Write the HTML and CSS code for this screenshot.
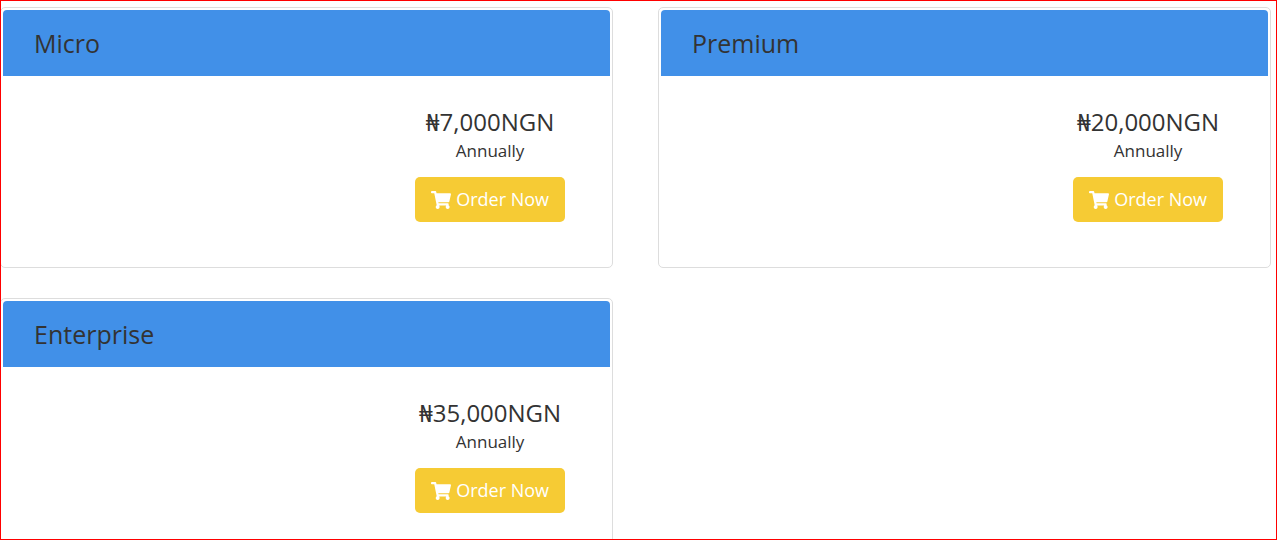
FILE: index.html
```html
<!DOCTYPE html>
<html lang="en">
<head>
<meta charset="utf-8">
<title>Plans</title>
<link rel="stylesheet" href="styles.css">
</head>
<body>
<svg class="sprite" aria-hidden="true">
  <symbol id="cart" viewBox="0 0 576 512">
    <path d="M528.12 301.319l47.273-208C578.806 78.301 567.391 64 551.99 64H159.208l-9.166-44.81C147.758 8.021 137.93 0 126.529 0H24C10.745 0 0 10.745 0 24v16c0 13.255 10.745 24 24 24h69.883l70.248 343.435C147.325 417.1 136 435.222 136 456c0 30.928 25.072 56 56 56s56-25.072 56-56c0-15.674-6.447-29.835-16.824-40h209.647C430.447 426.165 424 440.326 424 456c0 30.928 25.072 56 56 56s56-25.072 56-56c0-22.172-12.888-41.332-31.579-50.405l5.517-24.276c3.413-15.018-8.002-29.319-23.403-29.319H218.117l-6.545-32h293.145c11.206 0 20.92-7.754 23.403-18.681z"/>
  </symbol>
</svg>
<main class="frame">
  <div class="plans">
    <section class="plan">
      <header class="plan-header"><h2 class="plan-name">Micro</h2></header>
      <div class="plan-body">
        <div class="pricing">
          <span class="price">₦7,000NGN</span>
          <span class="cycle">Annually</span>
          <a class="order" href="#micro"><svg class="icon" aria-hidden="true"><use href="#cart"/></svg>Order Now</a>
        </div>
      </div>
    </section>
    <section class="plan">
      <header class="plan-header"><h2 class="plan-name">Premium</h2></header>
      <div class="plan-body">
        <div class="pricing">
          <span class="price">₦20,000NGN</span>
          <span class="cycle">Annually</span>
          <a class="order" href="#premium"><svg class="icon" aria-hidden="true"><use href="#cart"/></svg>Order Now</a>
        </div>
      </div>
    </section>
    <section class="plan">
      <header class="plan-header"><h2 class="plan-name">Enterprise</h2></header>
      <div class="plan-body">
        <div class="pricing">
          <span class="price">₦35,000NGN</span>
          <span class="cycle">Annually</span>
          <a class="order" href="#enterprise"><svg class="icon" aria-hidden="true"><use href="#cart"/></svg>Order Now</a>
        </div>
      </div>
    </section>
  </div>
</main>
</body>
</html>
```

FILE: styles.css
```css
* {
  box-sizing: border-box;
}

body {
  margin: 0;
  background: #fff;
  color: #333;
  font-family: "Open Sans", "Noto Sans", sans-serif;
}

.sprite {
  position: absolute;
  width: 0;
  height: 0;
}

.frame {
  position: relative;
  height: 100vh;
  overflow: hidden;
}

/* Red outline drawn over the cards' outer edge */
.frame::after {
  content: "";
  position: absolute;
  inset: 0;
  border: 1px solid #f00;
  pointer-events: none;
}

.plans {
  display: grid;
  grid-template-columns: 1fr 1fr;
  gap: 30px 45px;
  padding: 7px 6px 30px 0;
}

.plan {
  padding: 2px;
  border: 1px solid #ddd;
  border-radius: 5px;
}

.plan-header {
  padding: 16px 31px;
  border-radius: 4px 4px 0 0;
  background: #4190e8;
}

.plan-name {
  margin: 0;
  font-size: 25px;
  font-weight: 400;
  line-height: 34px;
}

.plan-body {
  display: flex;
  justify-content: flex-end;
  padding: 30px 45px 43px;
}

.pricing {
  display: flex;
  flex-direction: column;
  align-items: center;
}

.price {
  font-size: 24px;
  line-height: 32px;
}

.cycle {
  margin-bottom: 14px;
  font-size: 17px;
  line-height: 25px;
}

.order {
  display: flex;
  align-items: center;
  gap: 5px;
  padding: 10px 16px;
  border-radius: 5px;
  background: #f6cb34;
  color: #fff;
  font-size: 18px;
  line-height: 25px;
  text-decoration: none;
}

.icon {
  width: 20px;
  height: 18px;
  fill: currentColor;
}
```
